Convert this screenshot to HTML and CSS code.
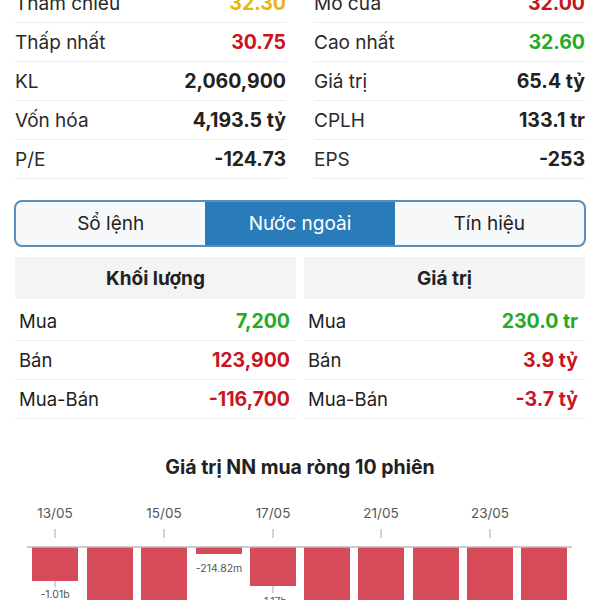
FILE: index.html
```html
<!DOCTYPE html>
<html lang="vi">
<head>
  <meta charset="UTF-8">
  <meta name="viewport" content="width=device-width, initial-scale=1.0">
  <title>Chi tiết cổ phiếu</title>
  <link rel="stylesheet" href="styles.css">
</head>
<body>
  <div class="stats">
    <div class="stats-col">
      <div class="stat-row"><span class="label">Thẩm chiếu</span><span class="value ref">32.30</span></div>
      <div class="stat-row"><span class="label">Thấp nhất</span><span class="value down">30.75</span></div>
      <div class="stat-row"><span class="label">KL</span><span class="value">2,060,900</span></div>
      <div class="stat-row"><span class="label">Vốn hóa</span><span class="value">4,193.5 tỷ</span></div>
      <div class="stat-row"><span class="label">P/E</span><span class="value">-124.73</span></div>
    </div>
    <div class="stats-col">
      <div class="stat-row"><span class="label">Mở cửa</span><span class="value down">32.00</span></div>
      <div class="stat-row"><span class="label">Cao nhất</span><span class="value up">32.60</span></div>
      <div class="stat-row"><span class="label">Giá trị</span><span class="value">65.4 tỷ</span></div>
      <div class="stat-row"><span class="label">CPLH</span><span class="value">133.1 tr</span></div>
      <div class="stat-row"><span class="label">EPS</span><span class="value">-253</span></div>
    </div>
  </div>

  <div class="tabs">
    <div class="tab">Sổ lệnh</div>
    <div class="tab active">Nước ngoài</div>
    <div class="tab">Tín hiệu</div>
  </div>

  <div class="foreign">
    <div class="foreign-table">
      <div class="foreign-head">Khối lượng</div>
      <div class="foreign-row"><span>Mua</span><span class="value up">7,200</span></div>
      <div class="foreign-row"><span>Bán</span><span class="value down">123,900</span></div>
      <div class="foreign-row"><span>Mua-Bán</span><span class="value down">-116,700</span></div>
    </div>
    <div class="foreign-table right">
      <div class="foreign-head">Giá trị</div>
      <div class="foreign-row"><span>Mua</span><span class="value up">230.0 tr</span></div>
      <div class="foreign-row"><span>Bán</span><span class="value down">3.9 tỷ</span></div>
      <div class="foreign-row"><span>Mua-Bán</span><span class="value down">-3.7 tỷ</span></div>
    </div>
  </div>

  <h3 class="chart-title">Giá trị NN mua ròng 10 phiên</h3>

  <svg class="chart" width="600" height="115" viewBox="0 0 600 115">
    <g class="dates">
      <text x="55" y="29">13/05</text>
      <text x="164" y="29">15/05</text>
      <text x="273" y="29">17/05</text>
      <text x="381" y="29">21/05</text>
      <text x="490" y="29">23/05</text>
    </g>
    <g class="ticks">
      <line x1="55" y1="40" x2="55" y2="49"/>
      <line x1="164" y1="40" x2="164" y2="49"/>
      <line x1="273" y1="40" x2="273" y2="49"/>
      <line x1="381" y1="40" x2="381" y2="49"/>
      <line x1="490" y1="40" x2="490" y2="49"/>
    </g>
    <g class="bars">
      <rect x="32" y="58" width="46" height="34"/>
      <rect x="87" y="58" width="46" height="90"/>
      <rect x="141" y="58" width="46" height="90"/>
      <rect x="196" y="58" width="46" height="7"/>
      <rect x="250" y="58" width="46" height="39"/>
      <rect x="304" y="58" width="46" height="90"/>
      <rect x="358" y="58" width="46" height="90"/>
      <rect x="413" y="58" width="46" height="90"/>
      <rect x="467" y="58" width="46" height="90"/>
      <rect x="521" y="58" width="46" height="90"/>
    </g>
    <line class="axis" x1="27" y1="58" x2="572" y2="58"/>
    <g class="ticks">
      <line x1="55" y1="92" x2="55" y2="98"/>
      <line x1="273" y1="97" x2="273" y2="104"/>
    </g>
    <g class="bar-labels">
      <text x="55" y="109">-1.01b</text>
      <text x="219" y="83">-214.82m</text>
      <text x="273" y="116">-1.17b</text>
    </g>
  </svg>
</body>
</html>
```

FILE: styles.css
```css
body {
  margin: 0;
  font-family: 'Inter', 'Roboto', sans-serif;
  background: #fff;
  color: #222;
  width: 600px;
  height: 600px;
  overflow: hidden;
}

.stats {
  display: grid;
  grid-template-columns: 1fr 1fr;
  column-gap: 28px;
  padding: 0 15px;
  margin-top: -16px;
}

.stat-row {
  display: flex;
  justify-content: space-between;
  align-items: center;
  height: 38px;
  border-bottom: 1px solid #ededed;
  font-size: 19px;
}

.label {
  color: #2a2a2a;
}

.value {
  font-weight: 700;
  color: #222;
}

.stat-row .value {
  font-size: 19.5px;
}

.ref { color: #e9b50c; }
.down { color: #c8151f; }
.up { color: #22ab26; }

.tabs {
  display: grid;
  grid-template-columns: 1fr 1fr 1fr;
  margin: 21px 14px 0;
  border: 2px solid #5a8fbb;
  border-radius: 8px;
  overflow: hidden;
  background: #f7f8f9;
}

.tab {
  height: 43px;
  display: flex;
  justify-content: center;
  align-items: center;
  font-size: 19px;
  color: #222;
}

.tab.active {
  background: #2a7bb9;
  color: #fff;
}

.foreign {
  display: grid;
  grid-template-columns: 281px 281px;
  column-gap: 8px;
  padding: 0 15px;
  margin-top: 10px;
}

.foreign-head {
  height: 42px;
  display: flex;
  justify-content: center;
  align-items: center;
  background: #f4f4f4;
  font-size: 19px;
  font-weight: 700;
  margin-bottom: 3px;
}

.foreign-row {
  display: flex;
  justify-content: space-between;
  align-items: center;
  height: 38px;
  padding: 0 6px 0 4px;
  border-bottom: 1px solid #efefef;
  font-size: 18.5px;
}

.foreign-row .value {
  font-size: 19.5px;
}

.foreign-table.right .foreign-row {
  padding-right: 7px;
}

.chart-title {
  margin: 36px 0 0;
  text-align: center;
  font-size: 19.5px;
  font-weight: 700;
  color: #222;
}

.chart {
  display: block;
  margin-top: 10px;
}

.dates text {
  font-family: 'Inter', sans-serif;
  font-size: 13.5px;
  fill: #555;
  text-anchor: middle;
}

.ticks line {
  stroke: #aaa;
  stroke-width: 1;
}

.bars rect {
  fill: #d64b59;
}

.axis {
  stroke: #bbb;
  stroke-width: 1.5;
}

.bar-labels text {
  font-family: 'Inter', sans-serif;
  font-size: 10.5px;
  fill: #555;
  text-anchor: middle;
}
```
